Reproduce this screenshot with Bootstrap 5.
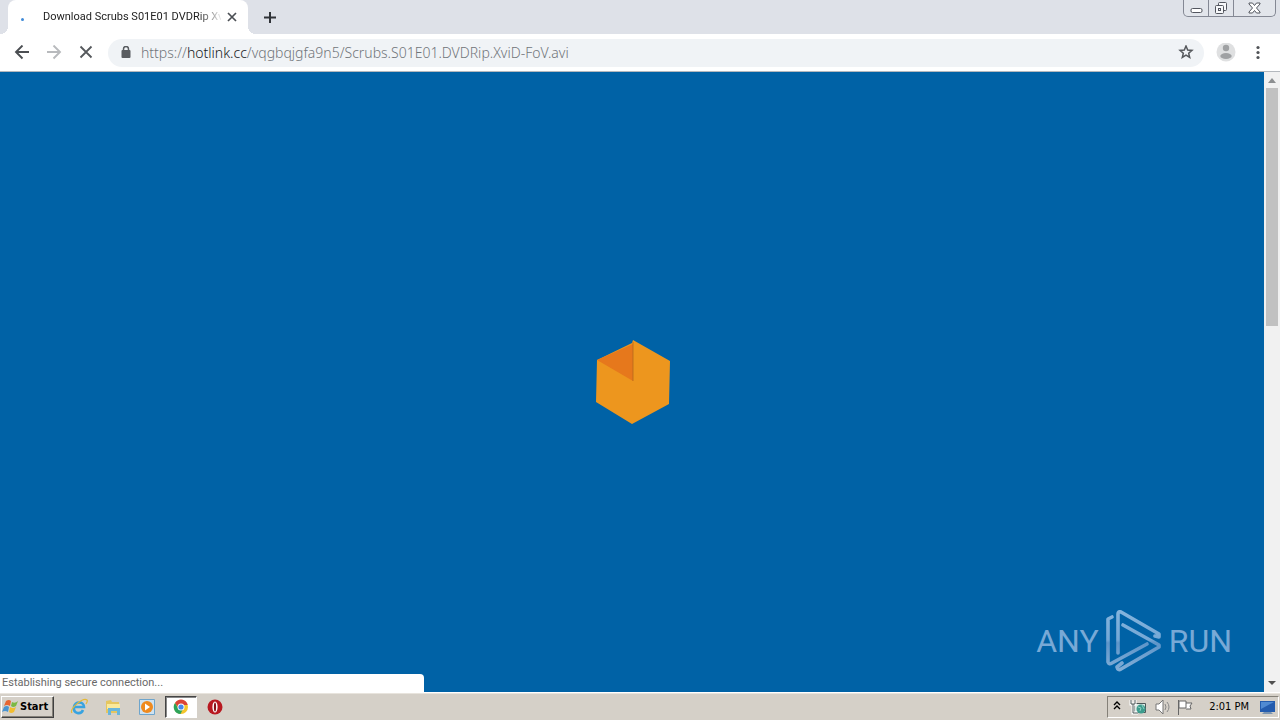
<!DOCTYPE html>
<html lang="en">
<head>
<meta charset="utf-8">
<meta name="viewport" content="width=device-width, initial-scale=1">
<title>Download Scrubs S01E01 DVDRip XviD</title>
<link rel="stylesheet" href="https://cdn.jsdelivr.net/npm/bootstrap@5.3.0/dist/css/bootstrap.min.css">
<style>
body{font-family:"DejaVu Sans Condensed","DejaVu Sans",sans-serif;font-size:11px;line-height:16px;color:#222}
button{border:0;background:none;padding:0;color:inherit}
svg{display:block;flex:none}
.strip{height:34px;background:#dee1e8}
.page-tab{width:240px;background:#fff;border-radius:8px 8px 0 0;margin-left:8px;padding-left:12px;padding-right:10px}
.page-tab::before,.page-tab::after{content:"";position:absolute;bottom:0;width:8px;height:8px}
.page-tab::before{left:-8px;background:radial-gradient(circle at 0 0,#dee1e8 8px,#fff 8px)}
.page-tab::after{right:-8px;background:radial-gradient(circle at 100% 0,#dee1e8 8px,#fff 8px)}
.dot{width:3px;height:3px;border-radius:2px;background:#3f8ad8;margin-top:4px;margin-left:1px}
.tab-title{font-family:Roboto,sans-serif;font-size:11px;width:178px;margin-left:19px;-webkit-mask-image:linear-gradient(90deg,#000 155px,transparent 180px);mask-image:linear-gradient(90deg,#000 155px,transparent 180px)}
.win{height:17px;border:1px solid #848894;border-top:0;border-radius:0 0 5px 5px;margin-right:4px;background:#e2e5eb}
.win button{width:24px;display:flex;justify-content:center;align-items:center}
.win button+button{width:25px;border-left:1px solid #848894}
.win button:last-child{width:42px}
.tools{height:38px;padding:0 18px 0 14px;border-bottom:1px solid #b4b8bd}
.address{height:28px;border-radius:14px;background:#f0f3f6;margin-left:14px;padding:0 10px 0 12px}
.url{font-family:"Noto Sans",sans-serif;font-size:14px;font-weight:300;line-height:20px;color:#70757a;margin-left:9px;text-decoration:none}
.url span{color:#16191c}
.menu{margin-left:14px}
.view{background:#0062a6}
.bar{width:16px;background:#f1f1f1}
.thumb{width:12px;height:238px;background:#c1c1c1}
.status{left:0;bottom:0;width:424px;height:18px;background:#fff;border-radius:0 4px 0 0;padding:1px 2px;color:#696969;font-family:Roboto,sans-serif}
.brand{right:32px;bottom:20px;gap:7px;font-family:Roboto,sans-serif;font-size:32px;line-height:62px;color:#78a9d6}
.task{height:28px;background:#d5d0c8;border-top:1px solid #fff;box-shadow:inset 0 1px #e8e4dd;padding:3px 0 2px 1px}
.start{width:53px;border:1px solid;border-color:#fff #404040 #404040 #fff;box-shadow:inset -1px -1px #848078;font-weight:bold;color:#000}
.apps{margin-left:9px}
.quick{width:32px;height:22px;display:flex;align-items:center;justify-content:center;margin-right:2px}
.quick.on{background:#fff;border:1px solid;border-color:#444 #fff #fff #444;box-shadow:inset 1px 1px #888}
.tray{border:1px solid;border-color:#848078 #fff #fff #848078;margin-right:1px;padding:0 1px 0 5px;color:#000}
.clock{margin:0 10px 0 14px}
</style>
</head>
<body class="vh-100 d-flex flex-column overflow-hidden bg-white">
<header>
  <div class="strip d-flex">
    <div class="page-tab position-relative d-flex align-items-center">
      <span class="dot"></span>
      <span class="tab-title text-nowrap">Download Scrubs S01E01 DVDRip Xv</span>
      <button class="ms-auto" aria-label="Close tab"><svg width="12" height="12" viewBox="0 0 12 12" stroke="#4b4f54" stroke-width="1.7"><path d="M2 2l8 8M10 2l-8 8"/></svg></button>
    </div>
    <button class="ms-3" aria-label="New tab"><svg width="13" height="13" viewBox="0 0 13 13" stroke="#303338" stroke-width="2"><path d="M6 1v11M0 6.500h12"/></svg></button>
    <div class="win ms-auto d-flex">
      <button aria-label="Minimize"><svg width="13" height="14" viewBox="0 0 13 14" fill="#fff" stroke="#53565f"><rect x="1" y="7.500" width="11" height="4" rx="1.500"/></svg></button>
      <button aria-label="Restore"><svg width="14" height="14" viewBox="0 0 14 14" fill="#f7f8fa" stroke="#53565f"><rect x="4.500" y="1.500" width="8" height="8" rx="1"/><rect x="1.500" y="4.500" width="8" height="8" rx="1"/><rect x="4.500" y="7.500" width="2" height="2"/></svg></button>
      <button aria-label="Close"><svg width="13" height="12" viewBox="0 0 13 12" fill="#fff" stroke="#53565f"><path d="M1 1h3.500l2 2.500L8.500 1H12v1L8.500 6l3.500 4v1H8.500l-2-2.500-2 2.500H1v-1l3.500-4L1 2z"/></svg></button>
    </div>
  </div>
  <nav class="tools d-flex align-items-center" aria-label="Browser">
    <button aria-label="Back"><svg width="16" height="16" viewBox="0 0 16 16" fill="none" stroke="#4b4e52" stroke-width="1.900"><path d="M15 7H2M8.500 .500L2 7l6.500 6.500"/></svg></button>
    <button class="ms-3" aria-label="Forward"><svg width="16" height="16" viewBox="0 0 16 16" fill="none" stroke="#b8babd" stroke-width="1.900"><path d="M1 7h13M7.500 .500L14 7l-6.500 6.500"/></svg></button>
    <button class="ms-3" aria-label="Stop"><svg width="16" height="16" viewBox="0 0 16 16" stroke="#55585c" stroke-width="1.800"><path d="M2.500 1.500l11 11M13.500 1.500l-11 11"/></svg></button>
    <div class="address flex-grow-1 d-flex align-items-center">
      <svg width="12" height="14" viewBox="0 0 12 14"><rect x="1.500" y="4" width="9" height="8" rx="1" fill="#595c60"/><path d="M3.500 5V3a2.500 2.500 0 015 0v2" fill="none" stroke="#595c60" stroke-width="1.500"/></svg>
      <a class="url text-nowrap" href="#">https://<span>hotlink.cc</span>/vqgbqjgfa9n5/Scrubs.S01E01.DVDRip.XviD-FoV.avi</a>
      <button class="ms-auto" aria-label="Bookmark"><svg width="16" height="16" viewBox="0 0 16 16" fill="none" stroke="#55585c" stroke-width="1.500"><path d="M8 1l1.700 4 4.300.400-3.300 2.900 1 4.200L8 10.200l-3.700 2.300 1-4.200L2 5.400 6.300 5z"/></svg></button>
    </div>
    <button class="ms-2 px-1" aria-label="Profile"><svg width="20" height="20" viewBox="0 0 20 20"><circle cx="10" cy="9" r="9.500" fill="#dfe0e1"/><g fill="#9fa1a3"><circle cx="10" cy="5" r="3.200"/><ellipse cx="10" cy="13" rx="5.700" ry="3"/></g></svg></button>
    <button class="menu" aria-label="Menu"><svg width="8" height="16" viewBox="0 0 8 16" fill="#505357"><circle cx="4" cy="2.500" r="1.600"/><circle cx="4" cy="7.500" r="1.600"/><circle cx="4" cy="12.500" r="1.600"/></svg></button>
  </nav>
</header>
<div class="d-flex flex-grow-1">
  <main class="view position-relative flex-grow-1 d-flex align-items-center justify-content-center">
    <svg width="76" height="86" viewBox="0 0 76 86"><path d="M3 21L38 4l1-3 37 21-1 43-37 20L2 63z" fill="#ed961e"/><path d="M3 21L39 5v37z" fill="#e6781c"/><path d="M39 3v39" stroke="#ad641c" stroke-width=".700"/></svg>
    <div class="brand position-absolute d-flex align-items-center">
      <span>ANY</span>
      <svg width="56" height="62" viewBox="0 0 56 62" fill="none" stroke-width="3.600" stroke-linejoin="round" stroke-linecap="round">
        <defs><linearGradient id="metal" gradientUnits="userSpaceOnUse" x1="0" y1="0" x2="0" y2="62"><stop stop-color="#84b4dd"/><stop offset=".480" stop-color="#75a8d6"/><stop offset=".530" stop-color="#5e95c9"/><stop offset="1" stop-color="#84afd7"/></linearGradient></defs>
        <g stroke="url(#metal)"><path d="M6 7L2 9v43q1 3 4 1l35-19"/><path d="M12 43V4q0-3 3-2l38 22v3l-4-1"/><path d="M17 15l36 20v2L15 59q-3 2-4-2l5-4"/></g>
      </svg>
      <span>RUN</span>
    </div>
    <div class="status position-absolute" role="status">Establishing secure connection...</div>
  </main>
  <div class="bar d-flex flex-column align-items-center">
    <svg width="16" height="16" viewBox="0 0 16 16" fill="#8d8f91"><path d="M4 11l4-5 4 5z"/></svg>
    <div class="thumb"></div>
    <svg class="mt-auto" width="16" height="18" viewBox="0 0 16 18" fill="#505050"><path d="M4 7l4 4 4-4z"/></svg>
  </div>
</div>
<footer class="task d-flex align-items-stretch">
  <button class="start d-flex align-items-center"><svg width="18" height="18" viewBox="0 0 18 18"><path d="M4 3q3-2 5 0L8 8Q5 6 2 8z" fill="#e76531"/><path d="M10 4q3 2 6-1l-2 5q-3 2-5 0z" fill="#7bb944"/><path d="M2 9q3-2 5 0l-1 5q-3-2-6 0z" fill="#4994d1"/><path d="M8 9q3 2 6 0l-2 5q-3 2-5 0z" fill="#f1bd30"/></svg>Start</button>
  <div class="apps d-flex">
    <button class="quick" aria-label="Internet Explorer"><svg width="18" height="18" viewBox="0 0 18 18" fill="none"><path d="M4 9h10c0-6-9-6-10 0-1 7 7 8 9 3" stroke="#38a3e0" stroke-width="2.600"/><path d="M2 15C-1 11 13-1 17 2q1 1-1 4" stroke="#e5b936" stroke-width="1.200"/></svg></button>
    <button class="quick" aria-label="Explorer"><svg width="18" height="18" viewBox="0 0 18 18"><path d="M2 3l5-1 1 2h7v11H2z" fill="#e5c660"/><path d="M3 6h13v5H3z" fill="#fae99b"/><path d="M4 10h12v7h-3v-4H7v4H4z" fill="#69b6dc"/></svg></button>
    <button class="quick" aria-label="Media Player"><svg width="18" height="18" viewBox="0 0 18 18"><path d="M1.500 1.500h15v15h-15z" fill="#cfe2f0" stroke="#6ea5cc"/><circle cx="9" cy="9" r="6" fill="#ef8a1e"/><path d="M7 5.500l5 3.500-5 3.500z" fill="#fff"/></svg></button>
    <button class="quick on" aria-label="Chrome"><svg width="16" height="16" viewBox="0 0 16 16"><circle cx="8" cy="8" r="7" fill="#f4c52c"/><path d="M2 4a7 7 0 0112 0l.700 2H8L5.500 9z" fill="#dc4437"/><path d="M2 4a7 7 0 005.500 11L10 10 5 9z" fill="#2da35a"/><circle cx="8" cy="8" r="3.500" fill="#fff"/><circle cx="8" cy="8" r="2.600" fill="#4688ed"/></svg></button>
    <button class="quick" aria-label="Opera"><svg width="16" height="16" viewBox="0 0 16 16"><circle cx="8" cy="8" r="7.500" fill="#b81820"/><ellipse cx="8" cy="8" rx="2.600" ry="5.500" fill="#fff"/><ellipse cx="8" cy="8" rx="1.100" ry="4.500" fill="#861016"/></svg></button>
  </div>
  <div class="tray ms-auto d-flex align-items-center">
    <svg width="8" height="12" viewBox="0 0 8 12" fill="none" stroke="#000" stroke-width="1.400"><path d="M1 4l3-3 3 3M1 8l3-3 3 3"/></svg>
    <svg class="ms-2 me-1" width="18" height="18" viewBox="0 0 18 18"><path d="M5.500 5.500h11v9h-11z" fill="#dceae5" stroke="#4c5858"/><path d="M2 2v4h4V2M4 6v9h5" fill="none" stroke="#fff" stroke-width="3"/><path d="M2 2v4h4V2M4 6v9h5" fill="none" stroke="#4c5858"/><circle cx="12" cy="11" r="4.500" fill="#3d9c8d"/><path d="M9 9l3 1-1 3M13 7l2 4" stroke="#8fd0c3" fill="none"/></svg>
    <svg class="ms-1" width="18" height="18" viewBox="0 0 18 18" fill="none" stroke="#777"><path d="M1 6h3l4-4v14l-4-4H1z" fill="#fff"/><path d="M10 6q2 3 0 6M12 4q4 5 0 10" stroke="#888"/></svg>
    <svg class="ms-1" width="18" height="18" viewBox="0 0 18 18"><path d="M1.500 2v15M2 3h7v7H2zM9 5h6l-2 3 1 3h-5" fill="#fff" stroke="#666"/></svg>
    <time class="clock" datetime="14:01">2:01 PM</time>
    <svg width="18" height="18" viewBox="0 0 18 18"><path d="M1 3h15v11H1z" fill="#245cae"/><path d="M2 4h13L2 11z" fill="#508ad2"/><path d="M5 14h7l2 2H3z" fill="#7c95b0"/></svg>
  </div>
</footer>
<script src="https://cdn.jsdelivr.net/npm/bootstrap@5.3.0/dist/js/bootstrap.bundle.min.js"></script>
</body>
</html>
